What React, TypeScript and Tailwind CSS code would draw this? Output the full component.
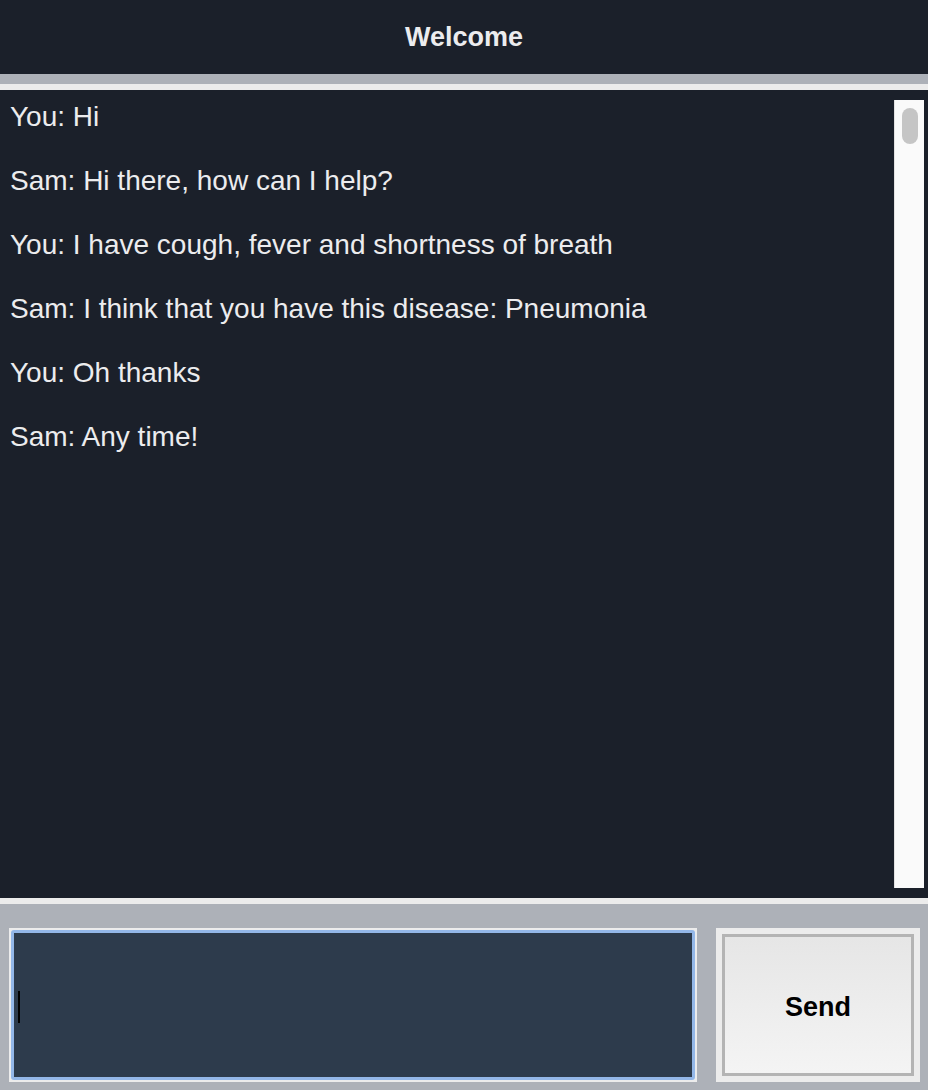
import React from "react";

const messages = [
  "You: Hi",
  "Sam: Hi there, how can I help?",
  "You: I have cough, fever and shortness of breath",
  "Sam: I think that you have this disease: Pneumonia",
  "You: Oh thanks",
  "Sam: Any time!",
];

export default function App() {
  return (
    <div
      className="w-[928px] h-[1090px] flex flex-col bg-[#adb1b8] overflow-hidden"
      style={{ fontFamily: '"Liberation Sans", Arial, sans-serif' }}
    >
      <div className="h-[74px] bg-[#1b202a] flex items-center justify-center">
        <span className="text-[27px] font-bold text-[#ececee]">Welcome</span>
      </div>
      <div className="h-[10px] bg-[#adb1b8]" />
      <div className="h-[6px] bg-[#ececec]" />
      <div className="h-[808px] bg-[#1b202a] flex">
        <div className="flex-1 flex flex-col gap-[32px] pt-[11px] pl-[10px] text-[28px] leading-[32px] text-[#ececee]">
          {messages.map((m) => (
            <div key={m}>{m}</div>
          ))}
        </div>
        <div className="w-[30px] mr-[4px] mt-[10px] mb-[10px] bg-[#fafafa] border-l border-[#e2e2e2] flex justify-center pt-[8px]">
          <div className="w-[16px] h-[36px] rounded-full bg-[#c5c5c5]" />
        </div>
      </div>
      <div className="h-[6px] bg-[#ececec]" />
      <div className="flex-1 flex pt-[24px] pl-[9px] pr-[8px] pb-[8px] gap-[19px]">
        <div className="w-[688px] h-[154px] bg-[#ececec] p-[2px]">
          <div className="w-full h-full bg-[#2d3b4c] border-[3px] border-[#93b7e8] rounded-[3px] flex items-center pl-[4px] pt-[4px]">
            <div className="w-[2px] h-[32px] bg-black" />
          </div>
        </div>
        <div className="w-[204px] h-[154px] bg-[#ececec] p-[6px]">
          <div className="w-full h-full border-[3px] border-[#b4b4b4] bg-gradient-to-b from-[#e6e6e6] to-[#f4f4f4] flex items-center justify-center pt-[4px]">
            <span className="text-[27px] font-bold text-black">Send</span>
          </div>
        </div>
      </div>
    </div>
  );
}
